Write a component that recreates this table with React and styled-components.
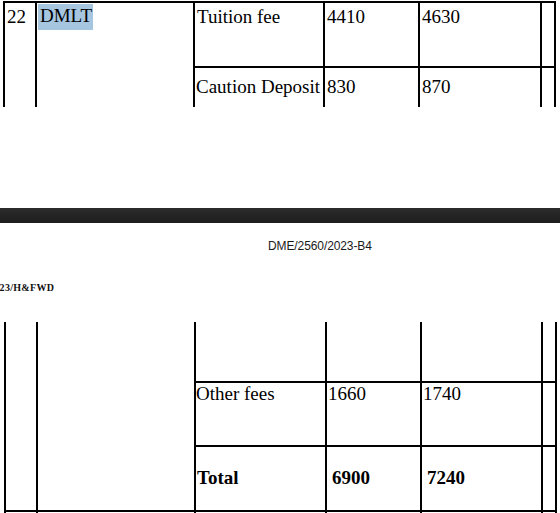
import React from 'react';
import styled, { createGlobalStyle } from 'styled-components';

const GlobalStyle = createGlobalStyle`
  html, body {
    margin: 0;
    padding: 0;
    height: 100%;
    overflow: hidden;
    background: #222;
  }
  #root {
    height: 100%;
  }
`;

const Viewer = styled.div`
  display: flex;
  flex-direction: column;
  height: 513px;
  width: 560px;
  overflow: hidden;
  background: #222;
`;

const Page = styled.div`
  background: #fff;
  flex: ${p => (p.$grow ? '1' : 'none')};
  height: ${p => (p.$height ? `${p.$height}px` : 'auto')};
  padding-top: ${p => p.$padTop || 0}px;
  overflow: hidden;
`;

const PageGap = styled.div`
  height: 15px;
  flex: none;
  background: linear-gradient(#2c2c2c, #1d1d1d);
`;

const Grid = styled.div`
  display: grid;
  width: fit-content;
  grid-template-columns: ${p => p.$cols};
  grid-template-rows: ${p => p.$rows};
  gap: 2px;
  background: #000;
  padding: ${p => (p.$top ? '2px 2px 0' : '0 2px')};
  margin-left: ${p => p.$left}px;
  margin-top: ${p => p.$mt}px;
`;

const Cell = styled.div`
  background: #fff;
  font-family: "Liberation Serif", "Times New Roman", serif;
  font-size: 19px;
  line-height: 22px;
  color: #000;
  white-space: nowrap;
  font-weight: ${p => (p.$bold ? 700 : 400)};
  padding-top: ${p => p.$pt || 0}px;
  padding-left: ${p => p.$pl || 0}px;
  grid-row: ${p => p.$span ? `span ${p.$span}` : 'auto'};
`;

const Selected = styled.span`
  display: inline-block;
  background: #a6c5df;
  padding: 1px 1px 3px 2px;
  margin-top: 1px;
`;

const DocRef = styled.div`
  font-family: "Liberation Sans", Arial, sans-serif;
  font-size: 12px;
  line-height: 14px;
  color: #1a1a1a;
  padding-left: 268px;
  letter-spacing: -0.1px;
`;

const FileNo = styled.div`
  margin-top: 29px;
  font-family: "Liberation Serif", "Times New Roman", serif;
  font-weight: 700;
  font-size: 10px;
  line-height: 12px;
  letter-spacing: 0.3px;
  color: #111;
  white-space: nowrap;
  overflow: hidden;
  span {
    display: inline-block;
    margin-left: -11px;
  }
`;

export default function App() {
  return (
    <>
      <GlobalStyle />
      <Viewer>
        <Page $height={208}>
          <Grid $top $left={3} $mt={1} $cols="30px 156px 128px 93px 120px 12px" $rows="63px 39px">
            <Cell $span={2} $pt={3} $pl={2}>22</Cell>
            <Cell $span={2} $pl={1}><Selected>DMLT</Selected></Cell>
            <Cell $pt={3} $pl={2}>Tuition fee</Cell>
            <Cell $pt={3} $pl={2}>4410</Cell>
            <Cell $pt={3} $pl={2}>4630</Cell>
            <Cell />
            <Cell $pt={8} $pl={1}>Caution Deposit</Cell>
            <Cell $pt={8} $pl={2}>830</Cell>
            <Cell $pt={8} $pl={2}>870</Cell>
            <Cell />
          </Grid>
        </Page>
        <PageGap />
        <Page $grow $padTop={16}>
          <DocRef>DME/2560/2023-B4</DocRef>
          <FileNo><span>2023/H&amp;FWD</span></FileNo>
          <Grid $left={4} $mt={28} $cols="30px 156px 129px 93px 119px 12px" $rows="59px 62px 63px 40px">
            <Cell $span={3} />
            <Cell $span={3} />
            <Cell />
            <Cell />
            <Cell />
            <Cell />
            <Cell $pl={0}>Other fees</Cell>
            <Cell $pl={1}>1660</Cell>
            <Cell $pl={1}>1740</Cell>
            <Cell />
            <Cell $bold $pt={20} $pl={1}>Total</Cell>
            <Cell $bold $pt={20} $pl={5}>6900</Cell>
            <Cell $bold $pt={20} $pl={5}>7240</Cell>
            <Cell />
            <Cell />
            <Cell />
            <Cell />
            <Cell />
            <Cell />
            <Cell />
          </Grid>
        </Page>
      </Viewer>
    </>
  );
}
